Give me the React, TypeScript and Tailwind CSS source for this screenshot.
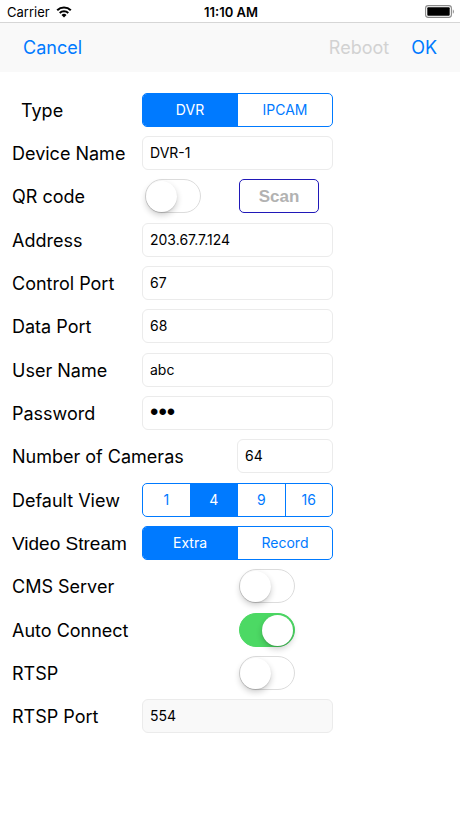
import { useState } from 'react';
import type { ReactNode } from 'react';

interface RowProps {
  label: string;
  htmlFor?: string;
  labelClass?: string;
  children: ReactNode;
}

/** One form line: label column plus two control columns */
function Row({ label, htmlFor, labelClass = 'text-[18px]', children }: RowProps) {
  return (
    <div className="grid h-[34px] grid-cols-[130px_minmax(0,95px)_minmax(0,96px)] items-center">
      <label htmlFor={htmlFor} className={`whitespace-nowrap pt-[2px] leading-6 ${labelClass}`}>
        {label}
      </label>
      {children}
    </div>
  );
}

interface FieldProps {
  id: string;
  value: string;
  type?: string;
  disabled?: boolean;
  className?: string;
  textClass?: string;
  onChange?: (value: string) => void;
}

function Field({
  id,
  value,
  type = 'text',
  disabled,
  className = 'col-span-2',
  textClass = 'text-[14px]',
  onChange,
}: FieldProps) {
  return (
    <input
      id={id}
      type={type}
      value={value}
      disabled={disabled}
      onChange={(e) => onChange?.(e.target.value)}
      className={`h-[34px] w-full rounded-md border border-[#ebebeb] bg-white px-[7px] pb-[2px] leading-5 text-black focus:outline-none disabled:bg-[#f9f9f9] ${textClass} ${className}`}
    />
  );
}

interface SegmentedProps {
  name: string;
  options: string[];
  value: string;
  onChange: (value: string) => void;
}

function Segmented({ name, options, value, onChange }: SegmentedProps) {
  return (
    <div
      role="radiogroup"
      aria-label={name}
      className="col-span-2 flex h-[34px] divide-x divide-[#007aff] overflow-hidden rounded-[5px] border border-[#007aff]"
    >
      {options.map((opt) => (
        <label
          key={opt}
          className="relative flex flex-1 cursor-pointer items-center justify-center text-[14px] leading-5 text-[#007aff] has-checked:bg-[#007aff] has-checked:text-white"
        >
          <input
            type="radio"
            name={name}
            value={opt}
            checked={value === opt}
            onChange={() => onChange(opt)}
            className="sr-only"
          />
          {opt}
        </label>
      ))}
    </div>
  );
}

interface ToggleProps {
  id: string;
  checked: boolean;
  onChange: (checked: boolean) => void;
  className?: string;
}

function Toggle({ id, checked, onChange, className = 'col-start-3 ml-[2px]' }: ToggleProps) {
  return (
    <input
      id={id}
      type="checkbox"
      role="switch"
      checked={checked}
      onChange={(e) => onChange(e.target.checked)}
      className={`flex h-[34px] w-[56px] cursor-pointer appearance-none items-center rounded-full border-[1px] border-[#dcdcdc] bg-white before:h-[31px] before:w-[31px] before:rounded-full before:bg-white before:shadow-[0_3px_6px_rgba(0,0,0,0.2),0_1px_1px_rgba(0,0,0,0.12)] checked:justify-end checked:border-[#4cd964] checked:bg-[#4cd964] checked:pr-px ${className}`}
    />
  );
}

function StatusBar() {
  return (
    <div className="grid h-[22px] grid-cols-[1fr_auto_1fr] items-center pl-[7px] pr-[5px] pt-px">
      <div className="flex items-center gap-[6px] text-[13px] leading-4">
        Carrier
        <svg viewBox="0 0 16 12" className="h-[12px] w-[16px]" aria-hidden="true">
          <path d="M1.2 4.3a9.8 9.8 0 0 1 13.6 0" fill="none" stroke="#000" strokeWidth="2.1" />
          <path d="M3.7 7a6.2 6.2 0 0 1 8.6 0" fill="none" stroke="#000" strokeWidth="2" />
          <path d="M8 11.6 5.5 9a3.6 3.6 0 0 1 5 0z" />
        </svg>
      </div>
      <div className="text-[13px] font-semibold leading-4">11:10 AM</div>
      <svg viewBox="0 0 30 13" className="h-[13px] w-[30px] justify-self-end" aria-hidden="true">
        <rect x="0.6" y="0.6" width="25.8" height="11.8" rx="2.6" fill="#fff" stroke="#8a8a8a" strokeWidth="1.1" />
        <rect x="2.3" y="2.3" width="22.4" height="8.4" rx="0.9" />
        <path d="M27.8 4.4c1.4.5 1.4 3.7 0 4.2z" fill="#8a8a8a" />
      </svg>
    </div>
  );
}

export default function App() {
  const [type, setType] = useState('DVR');
  const [view, setView] = useState('4');
  const [stream, setStream] = useState('Extra');
  const [fields, setFields] = useState({
    name: 'DVR-1',
    address: '203.67.7.124',
    controlPort: '67',
    dataPort: '68',
    user: 'abc',
    password: 'abc',
    cameras: '64',
  });
  const [toggles, setToggles] = useState({ qr: false, cms: false, auto: true, rtsp: false });

  const setField = (key: keyof typeof fields) => (value: string) =>
    setFields((prev) => ({ ...prev, [key]: value }));
  const setToggle = (key: keyof typeof toggles) => (checked: boolean) =>
    setToggles((prev) => ({ ...prev, [key]: checked }));

  return (
    <div className="min-h-screen bg-white font-['Inter','Liberation_Sans',sans-serif] text-black">
      <StatusBar />
      <header className="flex h-[50px] items-center border-t border-[#d6d6d6] bg-[#f9f9f9] px-[23px] text-[18px] leading-6">
        <button type="button" className="text-[#007aff]">
          Cancel
        </button>
        <button type="button" disabled className="ml-auto text-[#d2d2d2]">
          Reboot
        </button>
        <button type="button" className="ml-[22px] text-[#007aff]">
          OK
        </button>
      </header>

      <form className="flex flex-col gap-[10px] px-3 py-[21px]" onSubmit={(e) => e.preventDefault()}>
        <div className="flex flex-col gap-[9px]">
          <Row label="Type" labelClass="pl-[9px] text-[18px]">
            <Segmented name="Type" options={['DVR', 'IPCAM']} value={type} onChange={setType} />
          </Row>
          <Row label="Device Name" htmlFor="name">
            <Field id="name" value={fields.name} onChange={setField('name')} />
          </Row>
          <Row label="QR code" htmlFor="qr">
            <Toggle id="qr" checked={toggles.qr} onChange={setToggle('qr')} className="ml-[3px]" />
            <button
              type="button"
              disabled={!toggles.qr}
              className="ml-[2px] h-[34px] w-[80px] rounded-[5px] border border-[#2018b8] pt-[2px] font-['Liberation_Sans',sans-serif] text-[17px] font-bold leading-5 text-[#007aff] disabled:text-[#b2b2b2]"
            >
              Scan
            </button>
          </Row>
        </div>

        <div className="flex flex-col gap-[9px]">
          <Row label="Address" htmlFor="address">
            <Field id="address" value={fields.address} onChange={setField('address')} />
          </Row>
          <Row label="Control Port" htmlFor="controlPort">
            <Field id="controlPort" value={fields.controlPort} onChange={setField('controlPort')} />
          </Row>
          <Row label="Data Port" htmlFor="dataPort">
            <Field id="dataPort" value={fields.dataPort} onChange={setField('dataPort')} />
          </Row>
        </div>

        <div className="flex flex-col gap-[9px]">
          <Row label="User Name" htmlFor="user">
            <Field id="user" value={fields.user} onChange={setField('user')} />
          </Row>
          <Row label="Password" htmlFor="password">
            <Field
              id="password"
              type="password"
              value={fields.password}
              onChange={setField('password')}
              textClass="font-['Liberation_Sans',sans-serif] text-[24px]"
            />
          </Row>
          <Row label="Number of Cameras" htmlFor="cameras">
            <Field id="cameras" value={fields.cameras} onChange={setField('cameras')} className="col-start-3" />
          </Row>
        </div>

        <div className="flex flex-col gap-[9px]">
          <Row label="Default View">
            <Segmented name="Default View" options={['1', '4', '9', '16']} value={view} onChange={setView} />
          </Row>
          <Row label="Video Stream" labelClass="font-['Liberation_Sans',sans-serif] text-[19px]">
            <Segmented name="Video Stream" options={['Extra', 'Record']} value={stream} onChange={setStream} />
          </Row>
          <Row label="CMS Server" htmlFor="cms">
            <Toggle id="cms" checked={toggles.cms} onChange={setToggle('cms')} />
          </Row>
        </div>

        <div className="flex flex-col gap-[9px]">
          <Row label="Auto Connect" htmlFor="auto">
            <Toggle id="auto" checked={toggles.auto} onChange={setToggle('auto')} />
          </Row>
          <Row label="RTSP" htmlFor="rtsp">
            <Toggle id="rtsp" checked={toggles.rtsp} onChange={setToggle('rtsp')} />
          </Row>
          <Row label="RTSP Port" htmlFor="rtspPort">
            <Field id="rtspPort" value="554" disabled={!toggles.rtsp} />
          </Row>
        </div>
      </form>
    </div>
  );
}
